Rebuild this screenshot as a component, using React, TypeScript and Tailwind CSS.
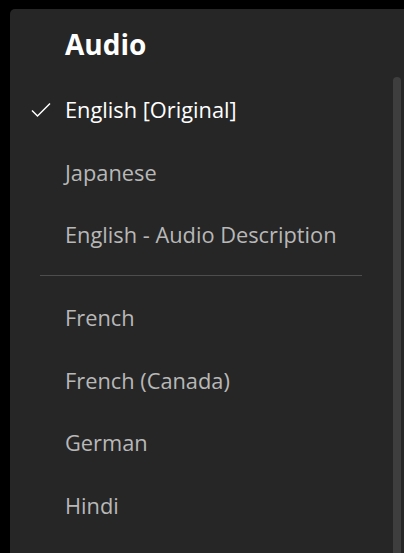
import React from "react";

const groupA = ["English [Original]", "Japanese", "English - Audio Description"];
const groupB = ["French", "French (Canada)", "German", "Hindi"];

function Row({ label, selected }: { label: string; selected?: boolean }) {
  return (
    <div className="relative flex h-[62.5px] items-center pl-[55px]">
      {selected && (
        <svg
          className="absolute left-[21px] top-1/2 -translate-y-1/2"
          width="20"
          height="16"
          viewBox="0 0 20 16"
          fill="none"
        >
          <path d="M1 8.5 L6.5 14 L19 1.5" stroke="#ffffff" strokeWidth="1.5" strokeLinejoin="miter" />
        </svg>
      )}
      <span
        className={
          "text-[21.8px] leading-none " + (selected ? "text-white" : "text-[#b8b8b8]")
        }
      >
        {label}
      </span>
    </div>
  );
}

export default function App() {
  return (
    <div
      className="h-[553px] w-[404px] overflow-hidden bg-black pl-[10px] pt-[9px]"
      style={{ fontFamily: '"Open Sans", "Noto Sans", sans-serif' }}
    >
      <div className="flex h-[560px] rounded-tl-[5px] bg-[#262626]">
        <div className="flex-1">
          <div className="flex h-[70px] items-center pl-[55px]">
            <span className="text-[28px] font-bold leading-none text-white">Audio</span>
          </div>
          {groupA.map((l, i) => (
            <Row key={l} label={l} selected={i === 0} />
          ))}
          <div className="ml-[30px] mr-[31px] mt-[8.5px] mb-[11px] h-px bg-[#4d4d4d]" />
          {groupB.map((l) => (
            <Row key={l} label={l} />
          ))}
        </div>
        <div className="mr-[3px] w-[8px] pt-[68px]">
          <div className="h-full rounded-t-[4px] bg-[#3e3e3e]" />
        </div>
      </div>
    </div>
  );
}
